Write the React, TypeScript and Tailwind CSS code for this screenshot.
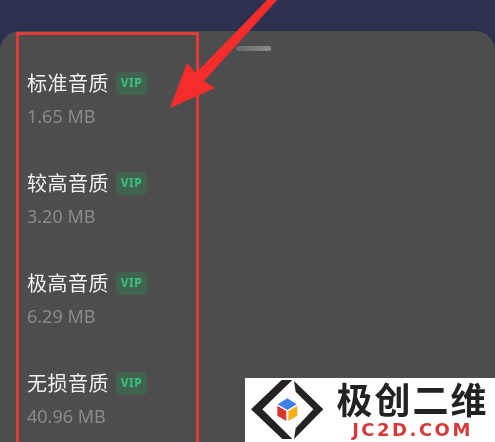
const levels = [
  { name: "标准音质", size: "1.65 MB" },
  { name: "较高音质", size: "3.20 MB" },
  { name: "极高音质", size: "6.29 MB" },
  { name: "无损音质", size: "40.96 MB" },
]

function Level({ name, size }: { name: string; size: string }) {
  return (
    <div className="h-[100px] shrink-0 blur-[0.4px]">
      <div className="flex h-[26px] items-center">
        <span className="text-[20px] leading-[26px] tracking-[0.5px] text-[#f0f0f0]">{name}</span>
        <span className="ml-[7px] flex h-[23px] w-[31px] -translate-y-[1px] items-center justify-center rounded-[5px] bg-[#40624f] text-[12px] font-bold tracking-[0.5px] text-[#37c07e]">
          VIP
        </span>
      </div>
      <div className="mt-[8px] text-[18px] leading-[22px] text-[#8a8a8a]">{size}</div>
    </div>
  )
}

function Arrow() {
  return (
    <svg className="absolute left-[160px] top-0" width="125" height="115" viewBox="160 0 125 115">
      <path d="M170 108 L187 63 L196 73 L269 -2 L279 -2 L204 81 L215 88 Z" fill="#f42c2c" />
    </svg>
  )
}

function Logo() {
  return (
    <div className="absolute bottom-0 right-0 flex h-[64px] w-[250px] bg-white">
      <svg width="90" height="64" viewBox="0 9 270 192" className="shrink-0">
        <path d="M110 15 L142 15 L52 103 L142 192 L112 192 L18 103 Z" fill="#232323" />
        <path d="M147 18 L235 103 L147 192 L152 160 L205 103 L152 50 Z" fill="#232323" />
        <path d="M127 70 L155 88 L127 105 L98 88 Z" fill="#3f7fe8" />
        <path d="M97 92 L124 108 L124 138 L97 122 Z" fill="#d8362c" />
        <path d="M130 108 L157 92 L157 122 L130 138 Z" fill="#f7b01a" />
      </svg>
      <div className="flex w-[155px] flex-col items-center pt-[3px]">
        <span className="text-[36px] font-bold leading-[34px] tracking-[2px] text-[#222] [font-family:'Noto_Sans_CJK_SC',sans-serif]">
          极创二维
        </span>
        <span className="mt-[5px] text-[18px] font-bold leading-[20px] tracking-[2.5px] text-[#d9383a] [font-family:'DejaVu_Sans',sans-serif]">
          JC2D.COM
        </span>
      </div>
    </div>
  )
}

export default function App() {
  return (
    <div className="relative h-[442px] w-[495px] overflow-hidden bg-[#2c3150] [font-family:'Noto_Sans','Noto_Sans_CJK_SC',sans-serif]">
      <div className="relative mt-[31px] flex h-[411px] flex-col rounded-t-[20px] bg-[#4d4d4d] pl-[27px] pt-[40px]">
        {levels.map((l) => (
          <Level key={l.name} {...l} />
        ))}
        <div className="absolute left-[236px] top-[15px] h-[5px] w-[35px] rounded-full bg-gradient-to-r from-[#6a6a6a] to-[#8c8c8c]" />
      </div>
      <div className="absolute left-[16px] top-[32px] h-[420px] w-[183px] border-[3px] border-[#e13a3a]" />
      <Arrow />
      <Logo />
    </div>
  )
}
